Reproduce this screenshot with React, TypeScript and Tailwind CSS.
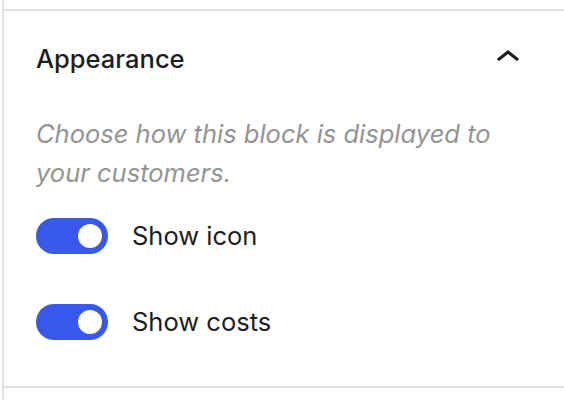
import React from "react";

function Toggle() {
  return (
    <span className="relative flex h-[36px] w-[72px] shrink-0 items-center rounded-full bg-[#3858e9]">
      <span className="absolute right-[6px] top-[6px] h-[24px] w-[24px] rounded-full bg-white" />
    </span>
  );
}

export default function App() {
  return (
    <div
      className="h-[400px] w-[564px] overflow-hidden bg-white"
      style={{ fontFamily: "Inter, 'Noto Sans', sans-serif" }}
    >
      <div className="ml-[2px] flex h-full flex-col border-l-2 border-[#e0e0e0]">
        <div className="h-[9px]" />
        <div className="border-y-2 border-[#e0e0e0]">
          <div className="flex h-[96px] items-center justify-between pl-[32px] pr-[32px]">
            <span className="text-[25.5px] font-medium text-[#1e1e1e]">Appearance</span>
            <svg width="48" height="48" viewBox="0 0 24 24" className="mt-[-2px]">
              <path d="M6.5 12.4L12 8l5.5 4.4-.9 1.2L12 10l-4.6 3.6-1-1.2z" fill="#1e1e1e" />
            </svg>
          </div>
          <div className="px-[32px] pb-[46px] pt-[7px]">
            <p className="text-[25.5px] italic leading-[39px] text-[#949494]">
              Choose how this block is displayed to your customers.
            </p>
            <div className="mt-[26px] flex flex-col gap-[50px]">
              <div className="flex h-[36px] items-center gap-[24px]">
                <Toggle />
                <span className="text-[25.5px] text-[#1e1e1e]">Show icon</span>
              </div>
              <div className="flex h-[36px] items-center gap-[24px]">
                <Toggle />
                <span className="text-[25.5px] text-[#1e1e1e]">Show costs</span>
              </div>
            </div>
          </div>
        </div>
      </div>
    </div>
  );
}
